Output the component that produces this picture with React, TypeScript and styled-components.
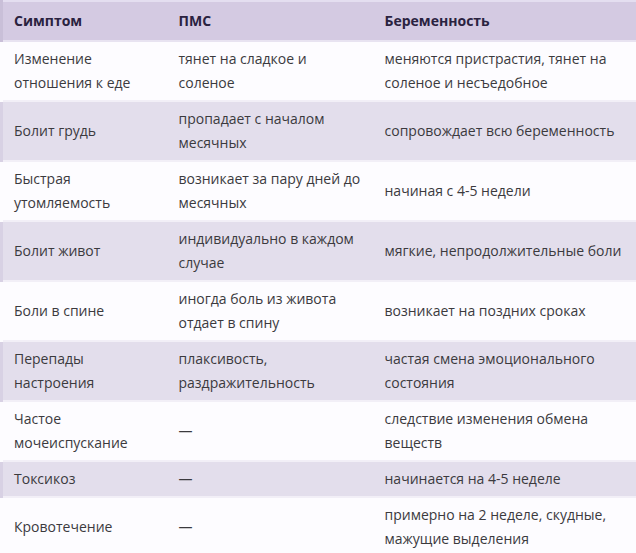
import React from 'react';
import styled, { createGlobalStyle } from 'styled-components';

interface Row {
  symptom: string;
  pms: string;
  pregnancy: string;
}

const rows: Row[] = [
  { symptom: 'Изменение отношения к еде', pms: 'тянет на сладкое и соленое', pregnancy: 'меняются пристрастия, тянет на соленое и несъедобное' },
  { symptom: 'Болит грудь', pms: 'пропадает с началом месячных', pregnancy: 'сопровождает всю беременность' },
  { symptom: 'Быстрая утомляемость', pms: 'возникает за пару дней до месячных', pregnancy: 'начиная с 4-5 недели' },
  { symptom: 'Болит живот', pms: 'индивидуально в каждом случае', pregnancy: 'мягкие, непродолжительные боли' },
  { symptom: 'Боли в спине', pms: 'иногда боль из живота отдает в спину', pregnancy: 'возникает на поздних сроках' },
  { symptom: 'Перепады настроения', pms: 'плаксивость, раздражительность', pregnancy: 'частая смена эмоционального состояния' },
  { symptom: 'Частое мочеиспускание', pms: '—', pregnancy: 'следствие изменения обмена веществ' },
  { symptom: 'Токсикоз', pms: '—', pregnancy: 'начинается на 4-5 неделе' },
  { symptom: 'Кровотечение', pms: '—', pregnancy: 'примерно на 2 неделе, скудные, мажущие выделения' },
];

const GlobalStyle = createGlobalStyle`
  html, body {
    margin: 0;
    padding: 0;
    background: #fdfcff;
  }
  *, *::before, *::after {
    box-sizing: border-box;
  }
`;

const Table = styled.table`
  width: 636px;
  border-collapse: collapse;
  table-layout: fixed;
  font-family: 'Open Sans', 'Noto Sans', sans-serif;
  font-size: 14px;
  line-height: 24px;
  color: #3b3a3e;
`;

const HeadRow = styled.tr`
  background: #d4cae2;
  border-top: 2px solid #e4def0;
`;

const HeadCell = styled.th`
  text-align: left;
  font-weight: 700;
  color: #2a2240;
  padding: 7px 8px 7px 12px;
  border-bottom: 2px solid #e8e3f1;
  &:first-child {
    border-left: 3px solid #c9bfd8;
    padding-left: 11px;
  }
`;

const BodyRow = styled.tr<{ $shaded: boolean }>`
  background: ${p => (p.$shaded ? '#e3deec' : '#fdfcff')};
  border-bottom: 2px solid #f2eff7;
  & > td:first-child {
    border-left: 3px solid ${p => (p.$shaded ? '#d8d1e4' : '#fdfcff')};
  }
`;

const Cell = styled.td`
  padding: 5px 8px 5px 12px;
  vertical-align: middle;
  &:first-child {
    padding-left: 11px;
    padding-right: 12px;
  }
`;

const App: React.FC = () => (
  <>
    <GlobalStyle />
    <Table>
      <colgroup>
        <col style={{ width: 165 }} />
        <col style={{ width: 206 }} />
        <col style={{ width: 265 }} />
      </colgroup>
      <thead>
        <HeadRow>
          <HeadCell>Симптом</HeadCell>
          <HeadCell>ПМС</HeadCell>
          <HeadCell>Беременность</HeadCell>
        </HeadRow>
      </thead>
      <tbody>
        {rows.map((row, i) => (
          <BodyRow key={row.symptom} $shaded={i % 2 === 1}>
            <Cell>{row.symptom}</Cell>
            <Cell>{row.pms}</Cell>
            <Cell>{row.pregnancy}</Cell>
          </BodyRow>
        ))}
      </tbody>
    </Table>
  </>
);

export default App;
